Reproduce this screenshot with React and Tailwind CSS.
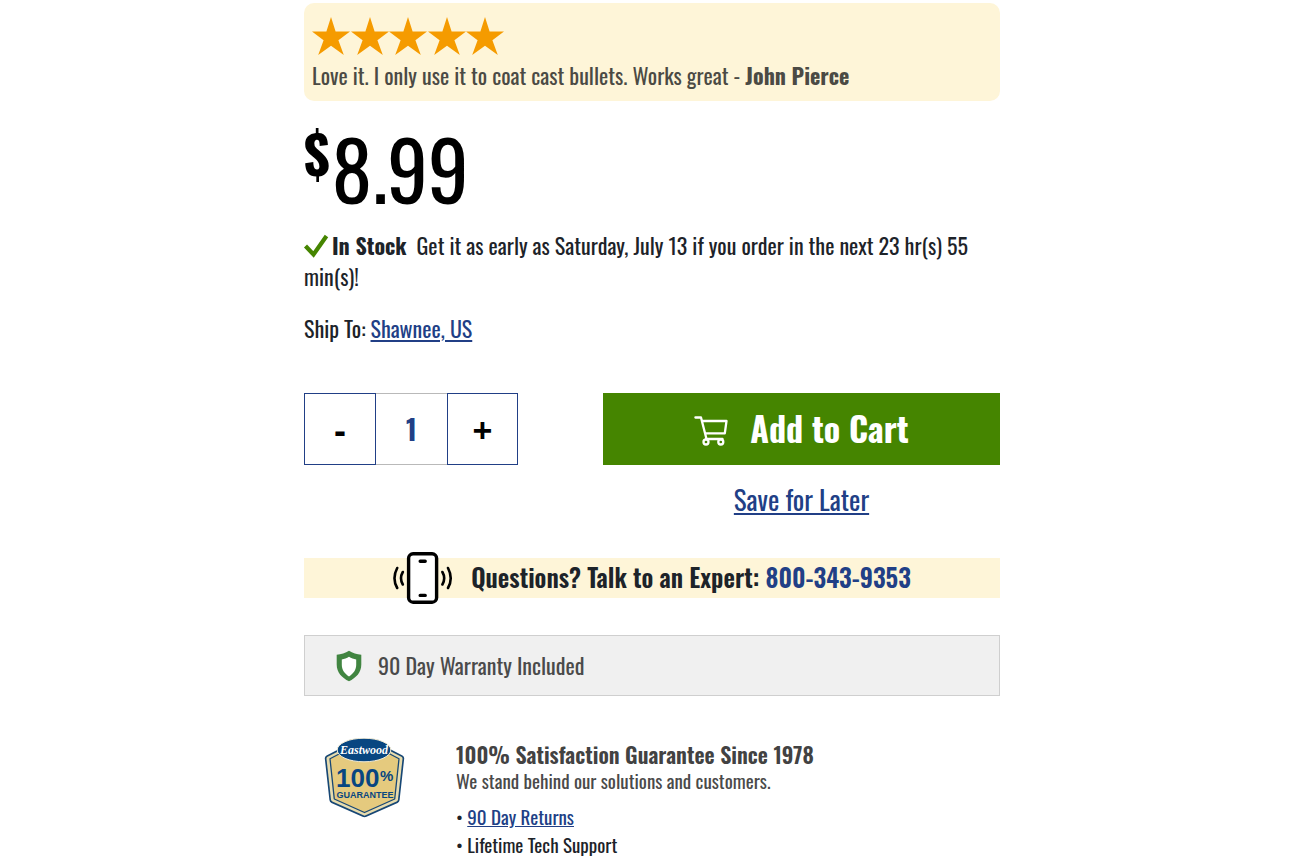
const STARS = [0, 1, 2, 3, 4];

function Star() {
  return (
    <svg viewBox="0 0 38 38" className="h-[38px] w-[38px]" fill="#f59b00" aria-hidden="true">
      <path d="M19 0 L23.6 14.4 H38 L26.4 23.2 L31.8 38 L19 28.8 L6.2 38 L11.6 23.2 L0 14.4 H14.4 Z" />
    </svg>
  );
}

function CheckIcon() {
  return (
    <svg viewBox="0 0 24 24" className="mr-1 inline-block size-6 overflow-visible align-baseline" fill="none" stroke="#458500" strokeWidth="4.2" aria-hidden="true">
      <path d="M1.5 15L9.5 23.5L22.5 5" />
    </svg>
  );
}

function CartIcon() {
  return (
    <svg viewBox="0 0 34 30" className="mt-2 h-[30px] w-[34px]" fill="none" stroke="#fff" strokeWidth="2.3" strokeLinejoin="round" strokeLinecap="round" aria-hidden="true">
      <path d="M1.4 1.5H7L12.5 23M8 5H32.5L30.8 17.3H11.5M12 23H28.5" />
      <circle cx="12" cy="26" r="2.5" fill="#458500" />
      <circle cx="26.8" cy="26" r="2.5" fill="#458500" />
    </svg>
  );
}

function PhoneIcon() {
  return (
    <svg viewBox="0 0 60 52" className="h-[52px] w-[60px] shrink-0" fill="none" stroke="#000" strokeLinecap="round" aria-hidden="true">
      <rect x="15.6" y="1.8" width="28" height="48.4" rx="4.5" fill="#fff" strokeWidth="3.4" />
      <path d="M27.2 9.2H32.2M27.2 43.4H32.2" strokeWidth="3.4" />
      <path d="M4.2 16C.8 22.5 .8 30 4.2 36M9.8 20C7.5 24 7.5 28.5 9.8 32.5M49.4 20C51.7 24 51.7 28.5 49.4 32.5M55 16C58.4 22.5 58.4 30 55 36" strokeWidth="2.6" />
    </svg>
  );
}

function ShieldIcon() {
  return (
    <svg viewBox="0 0 26 32" className="h-8 w-[26px]" aria-hidden="true">
      <path d="M13 .8C9.5 3.2 5 4.5 .7 4.8V14.5C.7 22.5 6 28 13 31.2C20 28 25.3 22.5 25.3 14.5V4.8C21 4.5 16.5 3.2 13 .8Z" fill="#418541" />
      <path d="M13 6.8C10.8 8.3 8.2 9 5.8 9.4V15C5.8 20 9 24 13 26.4C17 24 20.2 20 20.2 15V9.4C17.8 9 15.2 8.3 13 6.8Z" fill="#fff" />
    </svg>
  );
}

function GuaranteeBadge() {
  return (
    <svg viewBox="0 0 82 80" className="h-20 w-[82px] shrink-0" role="img" aria-label="Eastwood 100% Guarantee">
      <path d="M16 10.5L2.5 17.5Q.6 18.6 .8 20.5L5.4 62Q5.6 64 7.4 65L38.5 78.8Q40.5 79.7 42.5 78.8L73.6 65Q75.4 64 75.6 62L80.2 20.5Q80.4 18.6 78.5 17.5L65 10.5Z" fill="#174775" />
      <path d="M16 12.5L3.6 18.8Q2.4 19.5 2.5 20.8L7 61.5Q7.2 63 8.4 63.6L40.5 77.8L72.6 63.6Q73.8 63 74 61.5L78.5 20.8Q78.6 19.5 77.4 18.8L65 12.5Z" fill="#e7dcae" />
      <path d="M17 15L6 20.8L10.3 61L40.5 74.5L70.7 61L75 20.8L64 15Z" fill="#e5ca7e" stroke="#174775" strokeWidth="1.3" strokeLinejoin="round" />
      <ellipse cx="40" cy="12" rx="26.8" ry="11.8" fill="#084681" stroke="#f3edd7" strokeWidth="1" />
      <text x="40" y="15.5" textAnchor="middle" fill="#fff" fontSize="12" fontStyle="italic" fontWeight="700" fontFamily="'Liberation Serif', serif">Eastwood</text>
      <text x="12" y="48.5" fill="#084681" fontSize="26" fontWeight="700" fontFamily="'Liberation Sans', sans-serif">100</text>
      <text x="56" y="43" fill="#084681" fontSize="15" fontWeight="700" fontFamily="'Liberation Sans', sans-serif">%</text>
      <text x="41" y="59.5" textAnchor="middle" fill="#084681" fontSize="9" fontWeight="700" fontFamily="'Liberation Sans', sans-serif">GUARANTEE</text>
    </svg>
  );
}

export default function App() {
  return (
    <div className="flex justify-center bg-white pt-[3px] pl-1 font-[Oswald,'Liberation_Sans',sans-serif] text-[#1d2329]">
      <main className="w-full max-w-[696px]">
        <section className="rounded-[10px] bg-[#fef5d8] px-2 pt-3.5 pb-2.5">
          <div className="flex w-48 justify-between" role="img" aria-label="5 out of 5 stars">
            {STARS.map((n) => <Star key={n} />)}
          </div>
          <p className="pt-1 text-[22px] leading-8 text-[#4b4a44]">
            Love it. I only use it to coat cast bullets. Works great - <b>John Pierce</b>
          </p>
        </section>

        <div className="flex items-start pt-5 text-black">
          <span className="text-[53px] leading-[62px] font-bold">$</span>
          <span className="pb-0.5 pl-0.5 text-[81px] leading-[93px]">8.99</span>
        </div>

        <p className="pt-3.5 text-[22px] leading-[31px]">
          <CheckIcon />
          <b className="mr-2.5">In Stock</b>
          Get it as early as Saturday, July 13 if you order in the next 23 hr(s) 55 min(s)!
        </p>
        <p className="pt-[21px] text-[22px] leading-[31px]">
          Ship To: <a href="#ship" className="text-[#213f86] underline">Shawnee, US</a>
        </p>

        <div className="flex items-start justify-between pt-[49px]">
          <div className="flex h-[72px] w-[214px] font-bold">
            <button type="button" aria-label="Decrease quantity" className="w-[72px] border border-[#213f86] pt-1 font-['Liberation_Sans',sans-serif] text-[36px] text-black">-</button>
            <input aria-label="Quantity" defaultValue="1" className="w-[71px] border-y border-[#b9b9b9] text-center text-[28px] text-[#213f86] outline-none" />
            <button type="button" aria-label="Increase quantity" className="w-[71px] border border-[#213f86] pt-0.5 font-['Liberation_Sans',sans-serif] text-[34px] text-black">+</button>
          </div>
          <div className="flex w-[397px] flex-col items-center">
            <button type="button" className="flex h-[72px] w-full items-center justify-center gap-[22px] bg-[#458500] pb-1 text-[34px] font-bold text-white">
              <CartIcon />
              Add to Cart
            </button>
            <a href="#save" className="pt-3.5 text-[27px] leading-10 text-[#213f86] underline">Save for Later</a>
          </div>
        </div>

        <section className="mt-[39px] flex h-10 items-center justify-center gap-[18px] bg-[#fef5d8] text-[25px] font-semibold">
          <PhoneIcon />
          <p className="pb-0.5">Questions? Talk to an Expert: <a href="tel:8003439353" className="text-[#213f86]">800-343-9353</a></p>
        </section>

        <section className="mt-[37px] flex h-[61px] items-center gap-4 border border-[#cfcfcf] bg-[#f0f0f0] pl-[31px] text-[22px] text-[#4a4a4a]">
          <ShieldIcon />
          <p>90 Day Warranty Included</p>
        </section>

        <section className="flex gap-[50px] pt-[42px] pl-5">
          <GuaranteeBadge />
          <div>
            <h2 className="text-[22px] leading-8 font-semibold text-[#424242]">100% Satisfaction Guarantee Since 1978</h2>
            <p className="text-[19px] leading-5 text-[#4a4a4a]">We stand behind our solutions and customers.</p>
            <ul className="pt-3 text-[19px] leading-7">
              <li>• <a href="#returns" className="text-[#213f86] underline">90 Day Returns</a></li>
              <li>• Lifetime Tech Support</li>
            </ul>
          </div>
        </section>
      </main>
    </div>
  );
}
